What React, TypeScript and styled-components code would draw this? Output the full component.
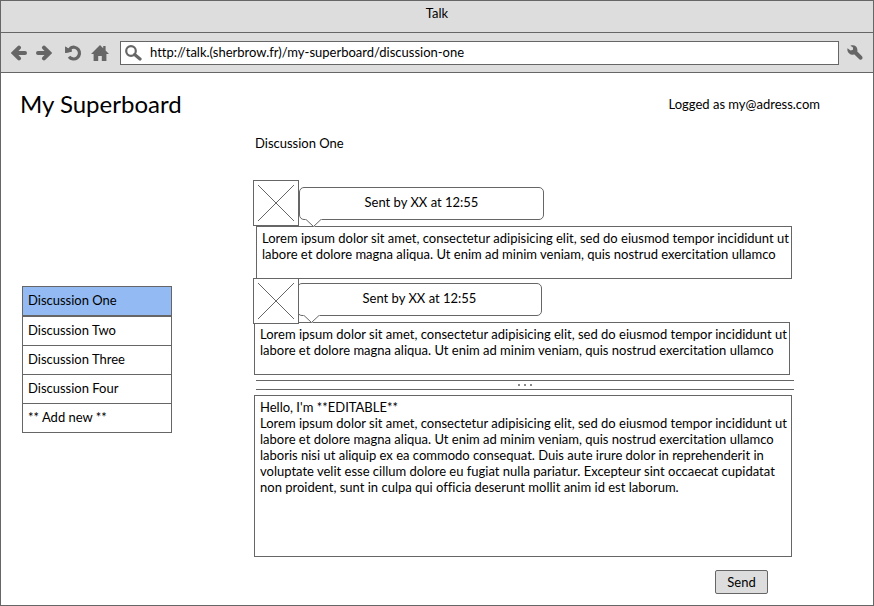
import React, { useState } from "react";
import styled, { createGlobalStyle } from "styled-components";

const LINE = "#666";
const CHROME = "#ddd";

const GlobalStyle = createGlobalStyle`
  *, *::before, *::after { box-sizing: border-box; }
  body { margin: 0; background: #fff; }
  body, button, input, textarea {
    font-family: Lato, "Liberation Sans", sans-serif;
    font-size: 13px;
    font-variant-ligatures: none;
    line-height: 16px;
    color: #000;
  }
`;

const Window = styled.div`
  display: flex;
  flex-direction: column;
  min-height: 100vh;
  border: 1px solid ${LINE};
`;

const TitleBar = styled.div`
  padding: 4px 0 11px;
  border-bottom: 1px solid ${LINE};
  background: ${CHROME};
  text-align: center;
`;

const Toolbar = styled.div`
  display: flex;
  align-items: center;
  padding: 8px 10px 7px;
  border-bottom: 1px solid ${LINE};
  background: ${CHROME};
`;

const ButtonGroup = styled.div<{ $after: number }>`
  display: flex;
  gap: 9px;
  margin-right: ${(p) => p.$after}px;
`;

const IconButton = styled.button`
  display: flex;
  padding: 0;
  border: 0;
  background: none;
  color: ${LINE};
  cursor: pointer;
`;

const AddressBar = styled.label`
  display: flex;
  flex: 1;
  align-items: center;
  gap: 8px;
  height: 24px;
  margin-right: 8px;
  padding-left: 4px;
  border: 1px solid ${LINE};
  background: #fff;
  color: ${LINE};
`;

const AddressInput = styled.input`
  flex: 1;
  min-width: 0;
  padding: 0 0 2px;
  border: 0;
  outline: 0;
  background: none;
`;

const PageHeader = styled.header`
  display: flex;
  align-items: center;
  justify-content: space-between;
  padding: 15px 53px 0 19px;
`;

const BoardTitle = styled.h1`
  margin: 0;
  font-size: 24px;
  font-weight: 400;
  line-height: 32px;
`;

const Body = styled.div`
  display: flex;
  align-items: flex-start;
  padding: 15px 79px 11px 21px;
`;

const DiscussionList = styled.ul`
  flex: none;
  width: 150px;
  margin: 151px 81px 0 0;
  padding: 0;
  border: 1px solid ${LINE};
  list-style: none;
`;

const DiscussionItem = styled.li<{ $active: boolean }>`
  border-bottom: ${(p) => (p.$active ? 2 : 1)}px solid ${LINE};
  background: ${(p) => (p.$active ? "#93baf2" : "#fff")};

  &:last-child { border-bottom: 0; }
`;

const DiscussionLink = styled.a`
  display: block;
  padding: 5px 5px 7px;
  color: #000;
  text-decoration: none;
`;

const Thread = styled.main`
  flex: 1;
  min-width: 0;
`;

const ThreadTitle = styled.h2`
  margin: 0 2px 29px;
  font-size: 13px;
  font-weight: 400;
`;

const Message = styled.article<{ $stacked: boolean }>`
  margin-top: ${(p) => (p.$stacked ? -1 : 0)}px;
`;

const MessageHeader = styled.header`
  position: relative;
  z-index: 1;
  display: flex;
`;

const Avatar = styled.svg`
  position: relative;
  z-index: 1;
  flex: none;
  border: 1px solid ${LINE};
  background: #fff;
`;

const Bubble = styled.div<{ $stacked: boolean }>`
  position: relative;
  width: 245px;
  height: 33px;
  margin: ${(p) => (p.$stacked ? "5px 0 0 -2px" : "7px 0 0")};
  padding: 6px 0 8px;
  border: 1px solid ${LINE};
  border-radius: 5px;
  background: #fff;
  text-align: center;
`;

const BubbleTail = styled.svg`
  position: absolute;
  top: 100%;
  left: 5px;
`;

const MessageBody = styled.p<{ $stacked: boolean }>`
  min-height: 53px;
  margin: ${(p) => (p.$stacked ? "-2px 4px 0 1px" : "0 2px 0 3px")};
  padding: 3px 0 3px 5px;
  border: 1px solid ${LINE};
`;

const Splitter = styled.div`
  display: flex;
  align-items: center;
  justify-content: center;
  gap: 4px;
  height: 10px;
  margin: 5px 0 5px 3px;
  border: solid ${LINE};
  border-width: 1px 0;
`;

const Grip = styled.span`
  width: 2px;
  height: 2px;
  background: #888;
`;

const Editor = styled.textarea`
  display: block;
  width: calc(100% - 3px);
  height: 162px;
  margin: 0 2px 13px 1px;
  padding: 3px 0 3px 5px;
  border: 1px solid ${LINE};
  border-radius: 0;
  outline: 0;
  background: #fff;
  resize: none;
  overflow: hidden;
`;

const Actions = styled.div`
  display: flex;
  justify-content: flex-end;
  padding-right: 26px;
`;

const SendButton = styled.button`
  min-width: 53px;
  padding: 3px 11px;
  border: 1px solid ${LINE};
  border-radius: 2px;
  background: ${CHROME};
`;

const discussions = ["Discussion One", "Discussion Two", "Discussion Three", "Discussion Four", "** Add new **"];

const excerpt =
  "Lorem ipsum dolor sit amet, consectetur adipisicing elit, sed do eiusmod tempor incididunt ut labore et dolore magna aliqua. Ut enim ad minim veniam, quis nostrud exercitation ullamco";

const draft = `Hello, I'm **EDITABLE**\n${excerpt} laboris nisi ut aliquip ex ea commodo consequat. Duis aute irure dolor in reprehenderit in voluptate velit esse cillum dolore eu fugiat nulla pariatur. Excepteur sint occaecat cupidatat non proident, sunt in culpa qui officia deserunt mollit anim id est laborum.`;

const messages = [
  { id: 1, meta: "Sent by XX at 12:55", text: excerpt },
  { id: 2, meta: "Sent by XX at 12:55", text: excerpt },
];

function ArrowIcon({ forward = false }: { forward?: boolean }) {
  return (
    <svg width="16" height="16" viewBox="0 0 16 16" fill="none" stroke="currentColor" strokeWidth="4" strokeLinecap="round">
      <path d={forward ? "M2 8h10M8 2.600 13.400 8 8 13.400" : "M14 8H4M8 2.600 2.600 8 8 13.400"} />
    </svg>
  );
}

function ReloadIcon() {
  return (
    <svg width="17" height="16" viewBox="0 0 17 16">
      <path d="M5 3.400A5.900 5.900 0 1 1 4 11.800" fill="none" stroke="currentColor" strokeWidth="3.200" />
      <path d="M.2 1.400V8l6.600-1.200z" fill="currentColor" />
      <path d="M.2 1.400 3.200 3.200 6.200 1.800 7 6.600.2 8z" fill="currentColor" />
    </svg>
  );
}

function HomeIcon() {
  return (
    <svg width="18" height="16" viewBox="0 0 18 16" fill="currentColor">
      <path d="M9 0 0 9h2.600v7h4.600v-5h3.600v5h4.600V9H18l-3.400-3.400V1h-2.400v2.200z" />
    </svg>
  );
}

function SearchIcon() {
  return (
    <svg width="17" height="16" viewBox="0 0 17 16" fill="none" stroke="currentColor">
      <circle cx="6" cy="6" r="4.800" strokeWidth="2.200" />
      <path d="m9.600 9.600 5.400 4.400" strokeWidth="3.200" strokeLinecap="round" />
    </svg>
  );
}

function WrenchIcon() {
  return (
    <svg width="16" height="16" viewBox="0 0 16 16" fill="currentColor">
      <path d="M.5 3.200 3.600 5.600 6 4.800 6 2.400 3.400.8C7-.6 10.600 1.400 10.400 5.400L10.300 6.600 15 11.200C16.600 13.200 14.400 15.800 12.300 14.200L7.400 9.600C3.400 10.400-.4 7.400.5 3.200z" />
    </svg>
  );
}

function Placeholder() {
  return (
    <Avatar width="46" height="46" viewBox="0 0 44 44" fill="none" stroke={LINE} role="img" aria-label="Avatar">
      <path d="M4 4 40 40M40 4 4 40" />
    </Avatar>
  );
}

export default function App() {
  const [url, setUrl] = useState("http://talk.(sherbrow.fr)/my-superboard/discussion-one");
  const [text, setText] = useState(draft);

  return (
    <>
      <GlobalStyle />
      <Window>
        <TitleBar>Talk</TitleBar>
        <Toolbar>
          <ButtonGroup $after={13}>
            <IconButton aria-label="Back"><ArrowIcon /></IconButton>
            <IconButton aria-label="Forward"><ArrowIcon forward /></IconButton>
          </ButtonGroup>
          <ButtonGroup $after={11}>
            <IconButton aria-label="Reload"><ReloadIcon /></IconButton>
            <IconButton aria-label="Home"><HomeIcon /></IconButton>
          </ButtonGroup>
          <AddressBar>
            <SearchIcon />
            <AddressInput aria-label="Address" value={url} onChange={(e) => setUrl(e.target.value)} />
          </AddressBar>
          <IconButton aria-label="Settings"><WrenchIcon /></IconButton>
        </Toolbar>

        <PageHeader>
          <BoardTitle>My Superboard</BoardTitle>
          <span>Logged as my@adress.com</span>
        </PageHeader>

        <Body>
          <DiscussionList>
            {discussions.map((name, i) => (
              <DiscussionItem key={name} $active={i === 0}>
                <DiscussionLink href="#">{name}</DiscussionLink>
              </DiscussionItem>
            ))}
          </DiscussionList>

          <Thread>
            <ThreadTitle>Discussion One</ThreadTitle>
            {messages.map((message, i) => (
              <Message key={message.id} $stacked={i > 0}>
                <MessageHeader>
                  <Placeholder />
                  <Bubble $stacked={i > 0}>
                    {message.meta}
                    <BubbleTail width="18" height="8" viewBox="0 0 18 8">
                      <path d="M0 0h17L9 8z" fill="#fff" />
                      <path d="M.5 0 8.500 7.500 16.500 0" fill="none" stroke={LINE} />
                    </BubbleTail>
                  </Bubble>
                </MessageHeader>
                <MessageBody $stacked={i > 0}>{message.text}</MessageBody>
              </Message>
            ))}
            <Splitter role="separator">
              <Grip />
              <Grip />
              <Grip />
            </Splitter>
            <Editor aria-label="Message" value={text} onChange={(e) => setText(e.target.value)} spellCheck={false} />
            <Actions>
              <SendButton>Send</SendButton>
            </Actions>
          </Thread>
        </Body>
      </Window>
    </>
  );
}
